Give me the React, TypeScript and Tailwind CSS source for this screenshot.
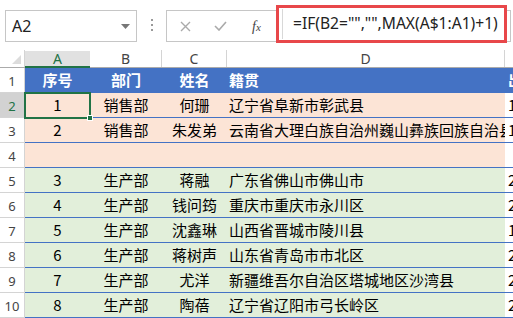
import React from "react";

const CJK = { fontFamily: '"Noto Sans CJK SC", "Noto Sans", sans-serif' };
const UI = { fontFamily: '"Noto Sans", "Open Sans", "Liberation Sans", sans-serif' };

type Row = { n: number; a: string; b: string; c: string; d: string; e: string; kind: "head" | "pink" | "green" };

const rows: Row[] = [
  { n: 1, a: "序号", b: "部门", c: "姓名", d: "籍贯", e: "出", kind: "head" },
  { n: 2, a: "1", b: "销售部", c: "何珊", d: "辽宁省阜新市彰武县", e: "1", kind: "pink" },
  { n: 3, a: "2", b: "销售部", c: "朱发弟", d: "云南省大理白族自治州巍山彝族回族自治县", e: "1", kind: "pink" },
  { n: 4, a: "", b: "", c: "", d: "", e: "", kind: "pink" },
  { n: 5, a: "3", b: "生产部", c: "蒋融", d: "广东省佛山市佛山市", e: "2", kind: "green" },
  { n: 6, a: "4", b: "生产部", c: "钱问筠", d: "重庆市重庆市永川区", e: "2", kind: "green" },
  { n: 7, a: "5", b: "生产部", c: "沈鑫琳", d: "山西省晋城市陵川县", e: "1", kind: "green" },
  { n: 8, a: "6", b: "生产部", c: "蒋树声", d: "山东省青岛市市北区", e: "2", kind: "green" },
  { n: 9, a: "7", b: "生产部", c: "尤洋", d: "新疆维吾尔自治区塔城地区沙湾县", e: "2", kind: "green" },
  { n: 10, a: "8", b: "生产部", c: "陶蓓", d: "辽宁省辽阳市弓长岭区", e: "2", kind: "green" },
];

function DataRow({ r }: { r: Row }) {
  const head = r.kind === "head";
  const bg = head ? "bg-[#4472c4]" : r.kind === "pink" ? "bg-[#fce4d6]" : "bg-[#e2efda]";
  const txt = head ? "text-white font-bold" : "text-black";
  const line = head ? "" : "border-b border-[#4472c4]";
  const sel = r.n === 2;
  return (
    <div className="flex h-[25px]">
      <div
        className={`w-[25px] shrink-0 flex items-center justify-center border-r border-b border-[#d4d4d4] text-[13px] pt-[4px] ${
          sel ? "bg-[#d2d2d2] text-[#217346]" : "bg-white text-[#444]"
        }`}
        style={UI}
      >
        {r.n}
      </div>
      <div className={`flex flex-1 items-center ${line} ${txt} text-[15px] overflow-hidden`} style={CJK}>
        <div className={`w-[65px] shrink-0 h-full flex items-center justify-center ${bg}`}>{r.a}</div>
        <div className={`w-[72px] shrink-0 h-full flex items-center justify-center ${bg}`}>{r.b}</div>
        <div className={`w-[65px] shrink-0 h-full flex items-center justify-center ${bg}`}>{r.c}</div>
        <div className={`w-[278px] shrink-0 h-full flex items-center pl-[2px] overflow-hidden whitespace-nowrap ${bg}`}>{r.d}</div>
        <div className={`flex-1 h-full flex items-center pl-[3px] overflow-hidden whitespace-nowrap ${head ? bg : "bg-white"}`}>{r.e}</div>
      </div>
    </div>
  );
}

export default function App() {
  return (
    <div className="w-[513px] h-[318px] bg-white overflow-hidden relative">
      {/* formula bar */}
      <div className="h-[50px] flex items-start relative">
        <div className="ml-[5px] mt-[10px] w-[132px] h-[32px] border border-[#c6c6c6] flex items-center justify-between pl-[6px] pr-[6px]">
          <span className="text-[16px] text-[#222]" style={UI}>A2</span>
          <svg width="9" height="5" viewBox="0 0 9 5"><path d="M0 0h9L4.5 5z" fill="#777" /></svg>
        </div>
        <div className="ml-[14px] mt-[19px] flex flex-col gap-[3px]">
          <div className="w-[2px] h-[2px] bg-[#999]" />
          <div className="w-[2px] h-[2px] bg-[#999]" />
          <div className="w-[2px] h-[2px] bg-[#999]" />
        </div>
        <div className="ml-[13px] mt-[10px] w-[345px] h-[32px] border border-[#c6c6c6] flex items-center">
          <svg className="ml-[13px]" width="11" height="11" viewBox="0 0 11 11"><path d="M1 1l9 9M10 1l-9 9" stroke="#aaa" strokeWidth="1.4" /></svg>
          <svg className="ml-[23px]" width="13" height="10" viewBox="0 0 13 10"><path d="M1 5l4 4 7-8" stroke="#aaa" strokeWidth="1.6" fill="none" /></svg>
          <span className="ml-[25px] text-[14px] italic text-[#444]" style={{ fontFamily: '"Liberation Serif", serif' }}>
            f<span className="text-[11px]">x</span>
          </span>
        </div>
        <div className="absolute left-[276px] top-[5px] w-[231px] h-[38px] border-[3px] border-[#e8474a] bg-white flex items-center">
          <div className="ml-[3px] h-[30px] w-[220px] border-l border-[#d8d8d8] flex items-center pl-[10px]">
            <span className="text-[15.6px] text-[#222] whitespace-nowrap" style={UI}>=IF(B2="","",MAX(A$1:A1)+1)</span>
          </div>
        </div>
      </div>
      {/* column headers */}
      <div className="flex h-[18px] border-b border-[#ababab] text-[14px] text-[#444]" style={UI}>
        <div className="w-[25px] shrink-0 border-r border-[#d4d4d4] relative">
          <svg className="absolute right-[3px] bottom-[3px]" width="9" height="9" viewBox="0 0 9 9"><path d="M9 0v9H0z" fill="#dcdcdc" /></svg>
        </div>
        <div className="w-[65px] shrink-0 bg-[#e1e1e1] border-b-2 border-[#217346] flex items-center justify-center text-[#217346] relative top-[1px]">A</div>
        <div className="w-[72px] shrink-0 border-r border-[#d4d4d4] flex items-center justify-center">B</div>
        <div className="w-[65px] shrink-0 border-r border-[#d4d4d4] flex items-center justify-center">C</div>
        <div className="w-[278px] shrink-0 border-r border-[#d4d4d4] flex items-center justify-center">D</div>
        <div className="flex-1" />
      </div>
      {/* rows */}
      <div className="flex flex-col">
        {rows.map((r) => (
          <DataRow key={r.n} r={r} />
        ))}
      </div>
      {/* selection */}
      <div className="absolute left-[24px] top-[92px] w-[67px] h-[27px] border-2 border-[#217346] pointer-events-none" />
      <div className="absolute left-[87px] top-[115px] w-[6px] h-[6px] bg-[#217346] border border-white" />
    </div>
  );
}
